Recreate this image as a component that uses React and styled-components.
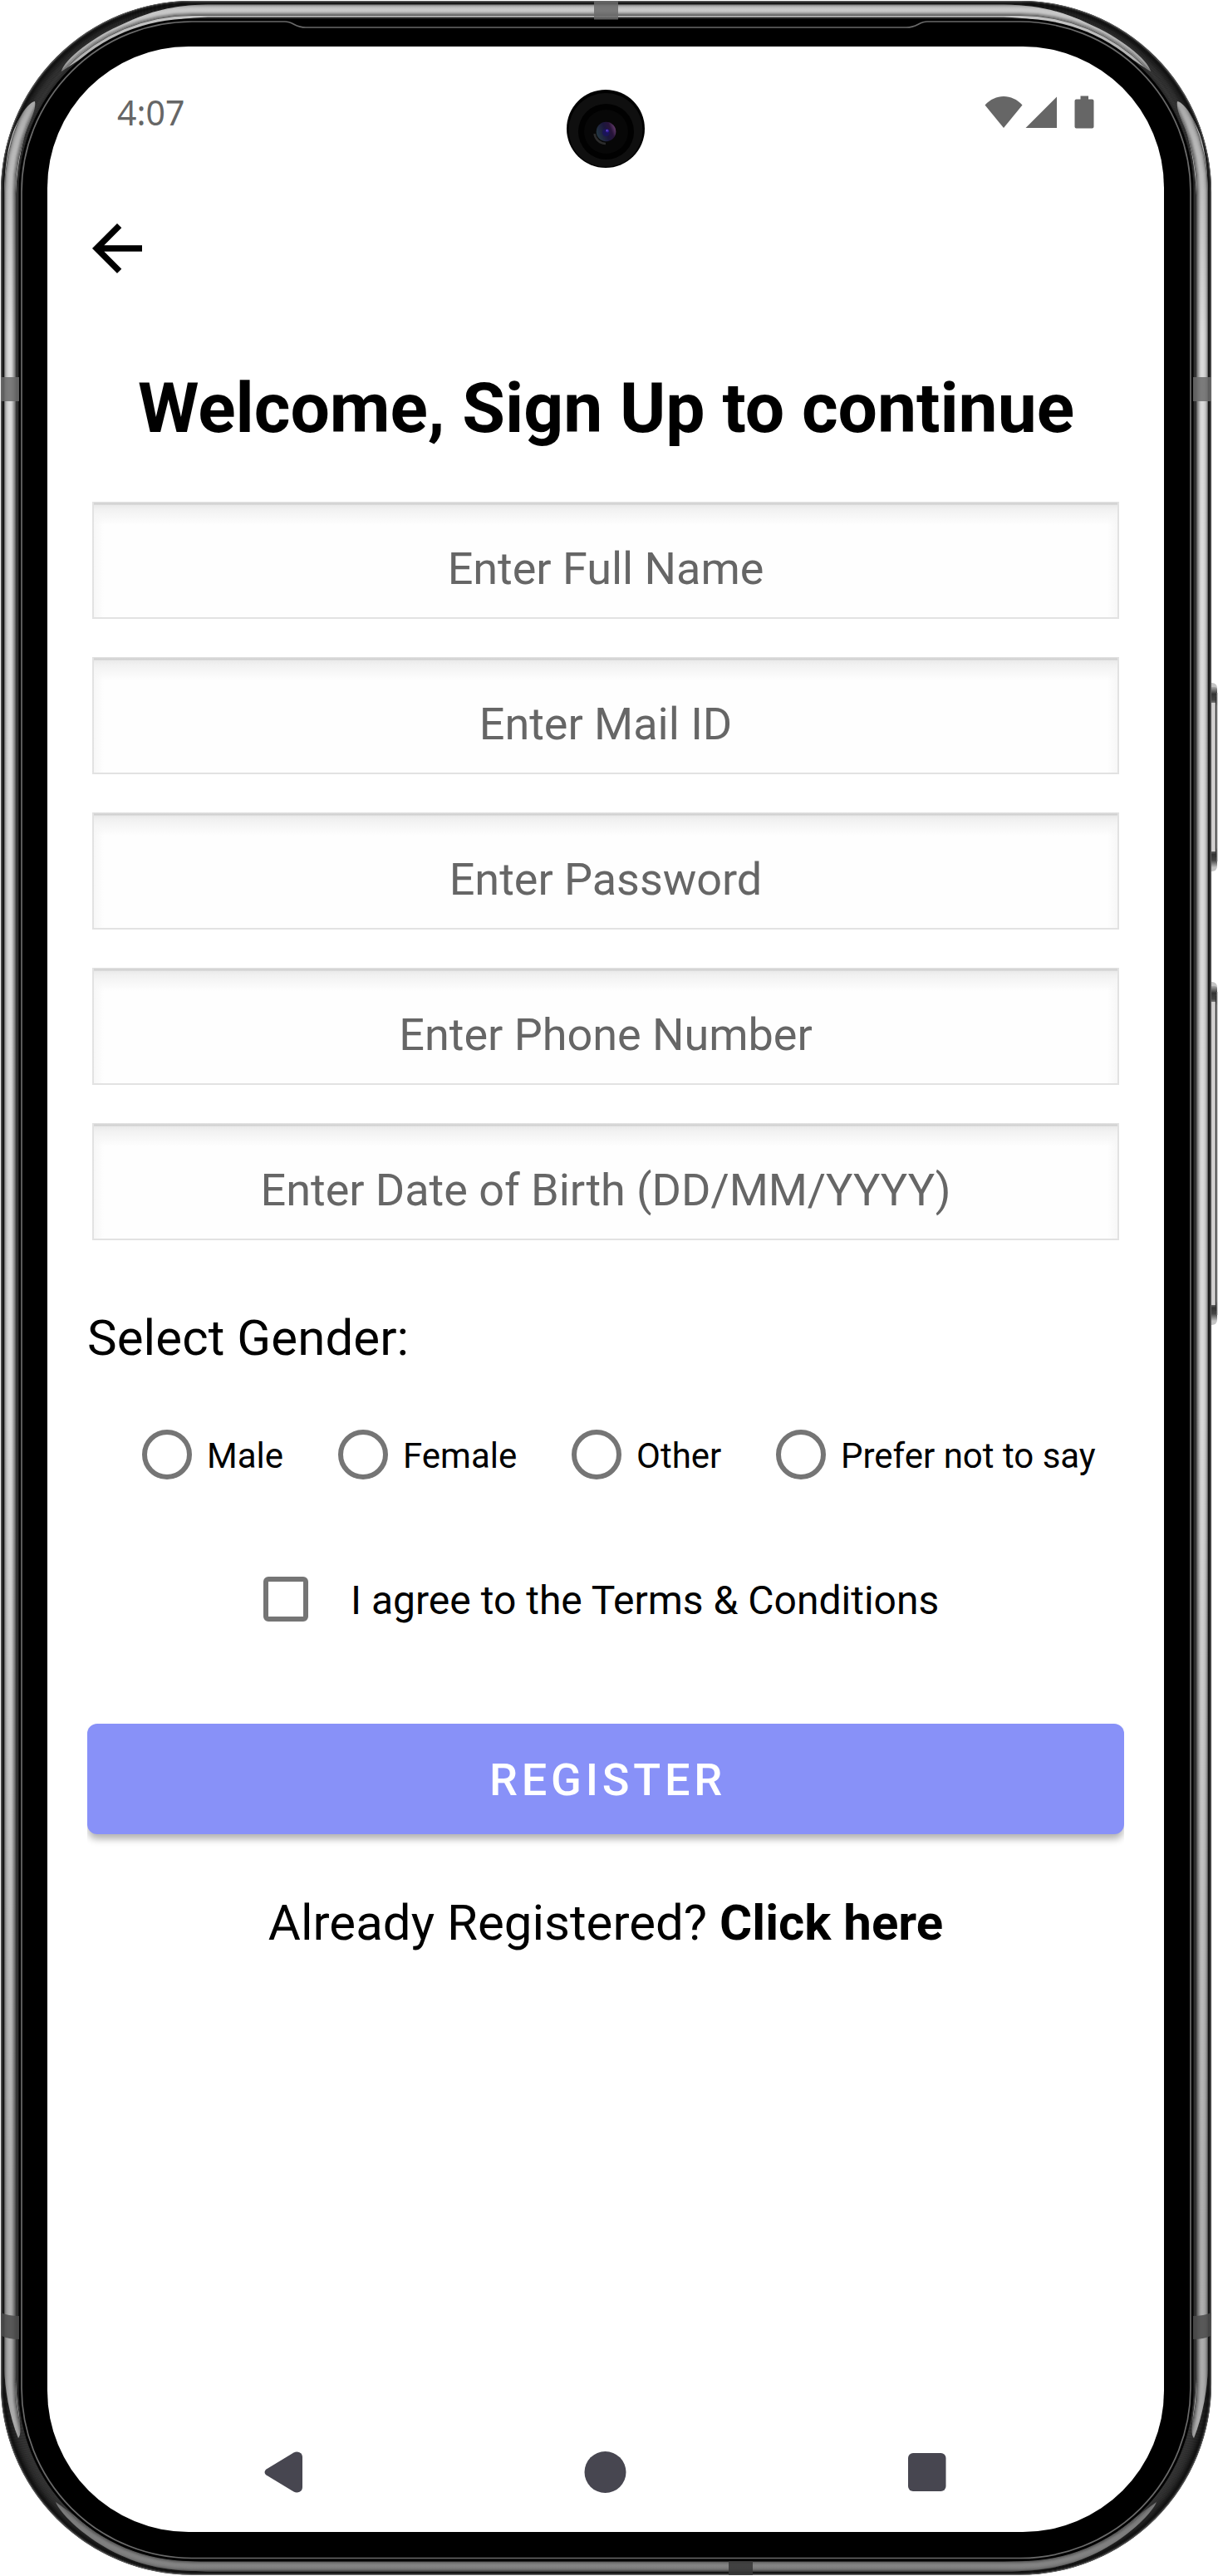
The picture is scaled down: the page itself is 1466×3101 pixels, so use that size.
import React from "react";
import styled, { createGlobalStyle } from "styled-components";

const GlobalStyle = createGlobalStyle`
  * { box-sizing: border-box; }
  body { margin: 0; background: #fff; }
`;

const Stage = styled.main`
  position: relative;
  width: 1466px;
  height: 3101px;
  padding: 56px 65px 53px 57px;
  overflow: hidden;
  background: #fff;
  font-family: Roboto, "Liberation Sans", sans-serif;
  color: #000;
`;

const BezelArt = styled.svg`
  position: absolute;
  inset: 0;
`;

const Screen = styled.section`
  position: relative;
  display: flex;
  flex-direction: column;
  width: 1344px;
  height: 2992px;
  padding: 0 48px;
  border-radius: 170px;
  background: #fff;
`;

const StatusBar = styled.header`
  display: flex;
  align-items: center;
  justify-content: space-between;
  height: 158px;
  padding: 0 36px 0 36px;
`;

const Clock = styled.time`
  font: 400 41px/60px "Noto Sans", sans-serif;
  color: #666;
`;

const StatusIcons = styled.svg`
  display: block;
`;

const CameraArt = styled.svg`
  position: absolute;
  left: 624px;
  top: 51px;
`;

const BackButton = styled.button`
  width: 90px;
  height: 90px;
  margin: 40px 0 0 -9px;
  padding: 0;
  border: 0;
  background: none;
  svg { display: block; }
`;

const Title = styled.h1`
  margin: 97px 0 0;
  padding-left: 1px;
  font-size: 84px;
  font-weight: 700;
  line-height: 102px;
  letter-spacing: -0.04px;
  text-align: center;
  white-space: nowrap;
`;

const Fields = styled.div`
  display: flex;
  flex-direction: column;
  gap: 46px;
  margin: 61px 6px 0;
`;

const Field = styled.div`
  height: 141px;
  padding-top: 49px;
  border: solid;
  border-width: 0 2px 2px;
  border-color: #e2e2e2;
  background:
    linear-gradient(#e4e4e4, #cdcdcd 3px, #eaeaea 4px, #f1f1f1 9px, #f6f6f6 16px, rgba(255, 255, 255, 0) 28px),
    linear-gradient(90deg, #f7f7f7, #fefefe 12px, #fefefe calc(100% - 12px), #f7f7f7);
  font-size: 54px;
  line-height: 64px;
  letter-spacing: -0.03px;
  text-align: center;
  color: #666;
`;

const SectionLabel = styled.h2`
  margin: 83px 0 0;
  font-size: 60px;
  font-weight: 400;
  line-height: 70px;
  letter-spacing: 0.08px;
`;

const RadioRow = styled.div`
  display: flex;
  height: 60px;
  margin: 75px 0 0 66px;
`;

const RadioOption = styled.div`
  display: flex;
  flex: none;
  gap: 18px;
  width: ${(p) => p.$width}px;
  font-size: 42px;
  line-height: 64px;
  white-space: nowrap;
`;

const RadioMark = styled.span`
  width: 60px;
  height: 60px;
  border: 6px solid #757575;
  border-radius: 50%;
`;

const TermsRow = styled.div`
  display: flex;
  gap: 51px;
  height: 54px;
  margin: 117px 0 0 212px;
  font-size: 48px;
  line-height: 57px;
  white-space: nowrap;
`;

const CheckMark = styled.span`
  width: 54px;
  height: 54px;
  border: 6px solid #757575;
  border-radius: 6px;
`;

const RegisterButton = styled.button`
  height: 133px;
  margin: 123px 0 0;
  padding: 3px 0 0 5px;
  border: 0;
  border-radius: 12px;
  background: #8891f8;
  box-shadow: 0 7px 8px -1px rgba(0, 0, 0, 0.3);
  clip-path: inset(-4px 0 -24px);
  color: #fff;
  font: 500 54px/130px Roboto, sans-serif;
  letter-spacing: 4.8px;
`;

const SignInLine = styled.p`
  margin: 72px 0 0;
  font-size: 60px;
  line-height: 70px;
  text-align: center;
  white-space: nowrap;
`;

const NavBar = styled.nav`
  display: flex;
  align-items: center;
  justify-content: space-between;
  height: 144px;
  margin: auto 209px 0 208px;
`;

const NavIcon = styled.svg`
  display: block;
  width: 56px;
  height: 56px;
  fill: #474650;
`;

/* One ring of the metal shell, inset by d from its outer edge. */
const Ring = ({ d, w = 1.2, stroke }) => (
  <rect
    x={1 + d}
    y={1 + d}
    width={1457 - 2 * d}
    height={3098.5 - 2 * d}
    rx={230 - d}
    fill="none"
    stroke={stroke}
    strokeWidth={w}
  />
);

const darkRings = [
  [0.5, "#5c5c5c"], [1.5, "#353535"], [2.5, "#1c1c1c"], [3.5, "#141414"],
  [4.5, "#161616"], [5.5, "#1b1b1b"], [6.5, "#202020"], [7.5, "#242424"],
  [8.5, "#282828"], [9.5, "#2b2b2b"], [10.5, "#2e2e2e"], [11.5, "#303030"],
  [12.5, "#323232"], [13.5, "#343434"], [14.5, "#353535"], [15.5, "#363636"],
  [16.5, "#373737"], [17.5, "#373737"], [18.5, "#363636"], [19.5, "#343434"],
  [20.5, "#303030"], [21.5, "#292929"],
];

const glossRings = [
  [4.5, 0.5], [5.5, 0.28], [6.5, 0.16], [7.5, 0.09], [8.5, 0.04], [9.5, 0.01],
  [10.5, 0], [11.5, 0], [12.5, 0.02], [13.5, 0.08], [14.5, 0.18], [15.5, 0.29],
  [16.5, 0.4], [17.5, 0.54],
];

const topGlint =
  "M74 86C77 72 112 44 150 28C180 14 208 6 250 5.500L1208 5.500C1251 6 1279 14 1309 28C1347 44 1382 72 1385 86C1360 70 1342 55 1309 44C1280 32 1256 22 1208 20.500L250 20.500C203 22 179 32 150 44C117 58 98 70 74 86Z";
const leftGlint =
  "M42 122C32 124 21 145 15 161C7 185 5 210 5 245L5 2850C6 2876 11 2908 22 2935C26 2931 24 2921 23 2907C20 2887 18.500 2866 18.500 2840L18.500 250C19 214 23 188 30 162C35 147 44 132 42 122Z";
const bottomGlint =
  "M67 3012C72 3025 103 3057 145 3076C180 3092 210 3095 250 3095.500L1208 3095.500C1249 3095 1279 3092 1314 3076C1356 3057 1387 3025 1392 3012C1372 3026 1345 3049 1309 3064C1278 3078 1253 3084 1208 3084L250 3084C206 3084 181 3078 150 3064C116 3049 87 3026 67 3012Z";

const speakerLine =
  "M26 231A205 205 0 0 1 231 26L343 26C353 26 355 33 368 33L1091 33C1104 33 1106 26 1116 26L1228 26A205 205 0 0 1 1433 231L1433 2874A205 205 0 0 1 1228 3079.500L231 3079.500A205 205 0 0 1 26 2874Z";

const SideKey = ({ y, h }) => (
  <g>
    <rect x="1450" y={y} width="15" height={h} rx="6" fill="#c4c4c4" />
    <rect x="1450" y={y + 5} width="15" height="24" rx="3" fill="url(#keyTop)" />
    <rect x="1450" y={y + h - 29} width="15" height="24" rx="3" fill="url(#keyTop)" />
    <rect x="1450" y={y + 24} width="13" height={h - 48} fill="#d2d0d0" />
    <rect x="1462.800" y={y + 17} width="1.700" height={h - 34} fill="#333" />
    <rect x="1464.500" y={y + 12} width="1" height={h - 24} fill="#999" />
  </g>
);

function Bezel() {
  return (
    <BezelArt width="1466" height="3101" viewBox="0 0 1466 3101" aria-hidden="true">
      <defs>
        <linearGradient id="metal" gradientUnits="userSpaceOnUse" x1="0" y1="0" x2="0" y2="3101">
          <stop offset="0" stopColor="#cdcdcd" />
          <stop offset="0.035" stopColor="#a2a2a2" />
          <stop offset="0.05" stopColor="#b4b4b4" />
          <stop offset="0.13" stopColor="#dadada" />
          <stop offset="0.55" stopColor="#d8d8d8" />
          <stop offset="0.86" stopColor="#adadad" />
          <stop offset="0.94" stopColor="#ababab" />
          <stop offset="0.965" stopColor="#767676" />
          <stop offset="1" stopColor="#858585" />
        </linearGradient>
        <linearGradient id="keyTop" x1="0" y1="0" x2="0" y2="1">
          <stop offset="0" stopColor="#aaa" />
          <stop offset="0.35" stopColor="#333" />
          <stop offset="0.65" stopColor="#444" />
          <stop offset="1" stopColor="#c0c0c0" />
        </linearGradient>
        <clipPath id="glints">
          <path d={topGlint} />
          <path d={leftGlint} />
          <path d={leftGlint} transform="translate(1459 0) scale(-1 1)" />
          <path d={bottomGlint} />
        </clipPath>
      </defs>
      <SideKey y={822} h={227} />
      <SideKey y={1182} h={413} />
      <rect x="1" y="1" width="1457" height="3098.500" rx="230" fill="#000" />
      {darkRings.map(([d, c]) => (
        <Ring key={d} d={d} stroke={c} />
      ))}
      <g clipPath="url(#glints)">
        <rect width="1466" height="3101" fill="url(#metal)" />
        {glossRings.map(([d, a]) => (
          <Ring key={d} d={d} w={1} stroke={`rgba(0,0,0,${a})`} />
        ))}
      </g>
      <rect x="22.500" y="22.500" width="1414" height="3060.500" rx="208" fill="#000" />
      <g fill="#6b6b6b" fillOpacity="0.86">
        <path d="M1 454H23V483H1Z" />
        <path d="M1436 454H1458V483H1436Z" />
        <path d="M715 1H744V23.500H715Z" />
      </g>
      <g fill="#4c4c4c" fillOpacity="0.88">
        <path d="M1 2784Q10 2788 23 2788V2816Q10 2816 2 2812Z" />
        <path d="M1458 2784Q1449 2788 1436 2788V2816Q1449 2816 1457 2812Z" />
        <path d="M877 3083H906V3100H877Z" fill="#383838" />
      </g>
      <path d={speakerLine} fill="#000" stroke="#6a6a6a" strokeWidth="1.700" />
    </BezelArt>
  );
}

function Camera() {
  return (
    <CameraArt width="96" height="96" viewBox="0 0 96 96" aria-hidden="true">
      <defs>
        <linearGradient id="lens" x1="0" y1="0.7" x2="1" y2="0.3">
          <stop offset="0" stopColor="#243a42" />
          <stop offset="0.5" stopColor="#1b163c" />
          <stop offset="0.75" stopColor="#28143a" />
          <stop offset="1" stopColor="#6a4070" />
        </linearGradient>
      </defs>
      <circle cx="48" cy="48" r="47" fill="#000" />
      <circle cx="48" cy="49.500" r="44.500" fill="#0f0f0f" />
      <circle cx="48.500" cy="51.500" r="33.500" fill="#010101" />
      <circle cx="48.500" cy="51.500" r="26.500" fill="#070707" />
      <path d="M34.500 54A14 14 0 0 0 48 66" fill="none" stroke="#2c2c2c" strokeWidth="2.500" />
      <circle cx="48.500" cy="51.500" r="11.800" fill="url(#lens)" />
      <circle cx="48.500" cy="52.500" r="4.500" fill="#1a1458" />
      <circle cx="50" cy="50.500" r="1.900" fill="#351c9c" />
      <circle cx="49.500" cy="50" r="0.800" fill="#8a6cf0" />
    </CameraArt>
  );
}

const fields = [
  "Enter Full Name",
  "Enter Mail ID",
  "Enter Password",
  "Enter Phone Number",
  "Enter Date of Birth (DD/MM/YYYY)",
];

const genders = [
  ["Male", 236],
  ["Female", 281],
  ["Other", 246],
  ["Prefer not to say", 390],
];

export default function App() {
  return (
    <Stage>
      <GlobalStyle />
      <Bezel />
      <Screen>
        <Camera />
        <StatusBar>
          <Clock>4:07</Clock>
          <StatusIcons width="132" height="40" viewBox="0 0 132 40" fill="#666">
            <path d="M0.500 11.500C13 -2.500 33 -2.500 45.500 11.500L23 39Z" />
            <path d="M49.500 39L87 1.500V39Z" />
            <path d="M109 4.500H115.500V0.500H125V4.500H129.500Q131.500 4.500 131.500 6.500V37.500Q131.500 39.500 129.500 39.500H110.500Q108.500 39.500 108.500 37.500V6.500Q108.500 4.500 110.500 4.500Z" />
          </StatusIcons>
        </StatusBar>
        <BackButton aria-label="Back">
          <svg width="90" height="90" viewBox="0 0 24 24">
            <path d="M20 11H7.830l5.590-5.590L12 4l-8 8 8 8 1.410-1.410L7.830 13H20v-2z" />
          </svg>
        </BackButton>
        <Title>Welcome, Sign Up to continue</Title>
        <Fields>
          {fields.map((f) => (
            <Field key={f}>{f}</Field>
          ))}
        </Fields>
        <SectionLabel>Select Gender:</SectionLabel>
        <RadioRow>
          {genders.map(([name, width]) => (
            <RadioOption key={name} $width={width}>
              <RadioMark />
              {name}
            </RadioOption>
          ))}
        </RadioRow>
        <TermsRow>
          <CheckMark />
          I agree to the Terms &amp; Conditions
        </TermsRow>
        <RegisterButton>REGISTER</RegisterButton>
        <SignInLine>
          Already Registered? <b>Click here</b>
        </SignInLine>
        <NavBar>
          <NavIcon viewBox="0 0 56 56">
            <path d="M7.500 24.500L40.500 4.500Q44 2.500 47.500 4.200Q51 6 51 10V46Q51 50 47.500 51.800Q44 53.500 40.500 51.500L7.500 31.500Q5.500 30 5.500 28Q5.500 26 7.500 24.500Z" />
          </NavIcon>
          <NavIcon viewBox="0 0 56 56">
            <circle cx="27.500" cy="28" r="25" />
          </NavIcon>
          <NavIcon viewBox="0 0 56 56">
            <rect x="5" y="5" width="45.500" height="46" rx="6" />
          </NavIcon>
        </NavBar>
      </Screen>
    </Stage>
  );
}
